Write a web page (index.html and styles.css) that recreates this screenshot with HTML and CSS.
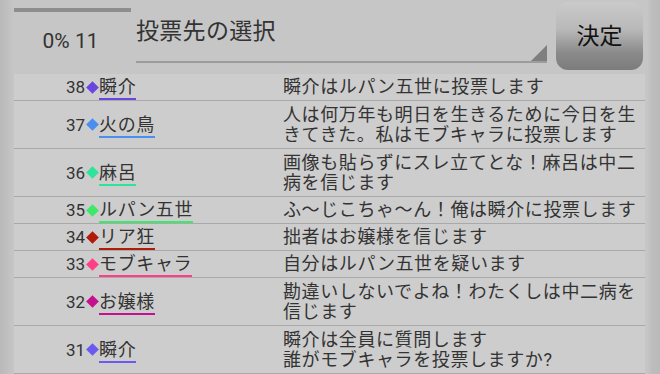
FILE: index.html
```html
<!DOCTYPE html>
<html lang="ja">
<head>
<meta charset="utf-8">
<link rel="stylesheet" href="styles.css">
</head>
<body>
<div class="screen">
  <header class="top">
    <div class="progress">
      <div class="bar"></div>
      <div class="count">0% 11</div>
    </div>
    <div class="spinner">
      <div class="title">投票先の選択</div>
      <div class="corner"></div>
    </div>
    <button class="ok">決定</button>
  </header>
  <div class="list">
    <div class="row">
      <div class="who"><span class="num">38</span><i class="dia c-violet"></i><span class="name c-violet">瞬介</span></div>
      <div class="msg">瞬介はルパン五世に投票します</div>
    </div>
    <div class="row tall">
      <div class="who"><span class="num">37</span><i class="dia c-blue"></i><span class="name c-blue">火の鳥</span></div>
      <div class="msg">人は何万年も明日を生きるために今日を生<br>きてきた。私はモブキャラに投票します</div>
    </div>
    <div class="row tall">
      <div class="who"><span class="num">36</span><i class="dia c-teal"></i><span class="name c-teal">麻呂</span></div>
      <div class="msg">画像も貼らずにスレ立てとな！麻呂は中二<br>病を信じます</div>
    </div>
    <div class="row">
      <div class="who"><span class="num">35</span><i class="dia c-green"></i><span class="name c-green">ルパン五世</span></div>
      <div class="msg">ふ～じこちゃ～ん！俺は瞬介に投票します</div>
    </div>
    <div class="row">
      <div class="who"><span class="num">34</span><i class="dia c-red"></i><span class="name c-red">リア狂</span></div>
      <div class="msg">拙者はお嬢様を信じます</div>
    </div>
    <div class="row">
      <div class="who"><span class="num">33</span><i class="dia c-pink"></i><span class="name c-pink">モブキャラ</span></div>
      <div class="msg">自分はルパン五世を疑います</div>
    </div>
    <div class="row tall">
      <div class="who"><span class="num">32</span><i class="dia c-magenta"></i><span class="name c-magenta">お嬢様</span></div>
      <div class="msg">勘違いしないでよね！わたくしは中二病を<br>信じます</div>
    </div>
    <div class="row tall">
      <div class="who"><span class="num">31</span><i class="dia c-violet2"></i><span class="name c-violet2">瞬介</span></div>
      <div class="msg">瞬介は全員に質問します<br>誰がモブキャラを投票しますか?</div>
    </div>
  </div>
</div>
</body>
</html>
```

FILE: styles.css
```css
* { box-sizing: border-box; }
html, body { margin: 0; padding: 0; }
body {
  width: 660px;
  height: 374px;
  overflow: hidden;
  font-family: Roboto, "Noto Sans CJK JP", sans-serif;
  color: #333;
  background: linear-gradient(to right, #b9b9b9 0, #c6c6c6 14px, #c6c6c6 647px, #bdbdbd 652px, #bababa 100%);
}
.screen { display: flex; flex-direction: column; }

.top {
  display: flex;
  height: 74px;
  padding-left: 14px;
}
.progress {
  width: 117px;
  padding-top: 8px;
}
.bar { height: 4px; background: #8e8e8e; }
.count {
  margin-top: 15px;
  text-align: center;
  font-size: 21px;
  line-height: 28px;
  color: #333;
  padding-right: 4px;
}
.spinner {
  position: relative;
  margin-left: 5px;
  width: 411px;
  height: 63px;
  border-bottom: 2px solid #9c9c9c;
}
.title {
  margin-top: 16px;
  font-size: 23px;
  line-height: 32px;
  letter-spacing: 0.3px;
  color: #333;
}
.corner {
  position: absolute;
  right: 0;
  bottom: 0;
  width: 0;
  height: 0;
  border-left: 16px solid transparent;
  border-bottom: 16px solid #7f7f7f;
}
.ok {
  margin: 2px 0 0 9px;
  width: 87px;
  height: 68px;
  border: none;
  border-radius: 12px;
  background: linear-gradient(to bottom, #cacaca 0%, #b9b9b9 40%, #8a8a8a 75%, #7c7c7c 100%);
  font-family: "Noto Sans CJK JP", sans-serif;
  font-size: 23px;
  letter-spacing: 0;
  color: #111;
  padding: 0 0 4px 0;
}

.list {
  margin-left: 14px;
  width: 631px;
  background: #cdcdcd;
}
.row {
  display: grid;
  grid-template-columns: 269px 1fr;
  align-items: center;
  border-bottom: 1px solid #a9a9a9;
  min-height: 26px;
}
.row.tall { min-height: 48px; }
.who {
  display: flex;
  align-items: center;
  padding-left: 52px;
}
.num {
  font-size: 17px;
  line-height: 22px;
  color: #333;
}
.dia {
  display: inline-block;
  width: 9px;
  height: 9px;
  margin: 0 2px 0 3px;
  transform: rotate(45deg);
  background: var(--c);
}
.name {
  font-size: 18px;
  line-height: 22px;
  letter-spacing: 0.6px;
  border-bottom: 2px solid var(--c);
  margin-top: 2px;
}
.msg {
  font-size: 18px;
  line-height: 20px;
  letter-spacing: 0.6px;
  padding: 2px 0 2px 0;
  color: #333;
}

.c-violet { --c: #6a45e0; }
.c-blue { --c: #4a8ef0; }
.c-teal { --c: #2ee39a; }
.c-green { --c: #3ee86a; }
.c-red { --c: #b01a08; }
.c-pink { --c: #ff3f85; }
.c-magenta { --c: #c4118f; }
.c-violet2 { --c: #6a5af0; }
```
